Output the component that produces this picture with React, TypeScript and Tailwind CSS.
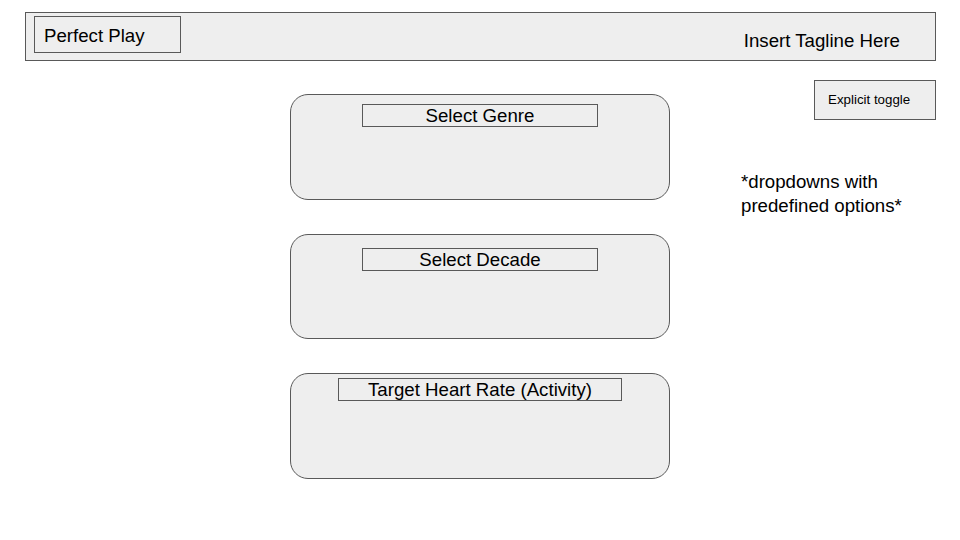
import React from "react";

function Card({ label, labelWidth, top, h }: { label: string; labelWidth: string; top: string; h: string }) {
  return (
    <div className={`${h} w-[380px] rounded-[18px] border border-[#595959] bg-[#eeeeee] flex flex-col items-center`}>
      <div className={`${top} ${labelWidth} h-[23px] pt-[2px] border border-[#595959] flex items-center justify-center text-[18.67px] leading-none text-black`}>
        {label}
      </div>
    </div>
  );
}

export default function App() {
  return (
    <div
      className="w-[960px] h-[540px] bg-white overflow-hidden text-black"
      style={{ fontFamily: '"Liberation Sans", Arial, sans-serif' }}
    >
      <div className="mt-[12px] ml-[25px] w-[911px] h-[49px] border border-[#595959] bg-[#eeeeee] flex items-start justify-between">
        <div className="mt-[3px] ml-[8px] w-[147px] h-[37px] pt-[3px] border border-[#595959] flex items-center pl-[9px] text-[18.67px] leading-none">
          Perfect Play
        </div>
        <div className="mt-[19px] mr-[35px] text-[18.67px] leading-none">Insert Tagline Here</div>
      </div>
      <div className="flex">
        <div className="ml-[290px] mt-[33px] w-[380px] flex flex-col gap-[34px]">
          <Card label="Select Genre" labelWidth="w-[236px]" top="mt-[9px]" h="h-[106px]" />
          <Card label="Select Decade" labelWidth="w-[236px]" top="mt-[13px]" h="h-[105px]" />
          <Card label="Target Heart Rate (Activity)" labelWidth="w-[284px]" top="mt-[4px]" h="h-[106px]" />
        </div>
        <div className="flex-1 flex flex-col">
          <div className="mt-[19px] self-end mr-[24px] w-[122px] h-[40px] border border-[#595959] bg-[#eeeeee] flex items-center pl-[13px] text-[13.33px] leading-none">
            Explicit toggle
          </div>
          <div className="mt-[50px] ml-[71px] text-[18.67px] leading-[24px]">
            *dropdowns with
            <br />
            predefined options*
          </div>
        </div>
      </div>
    </div>
  );
}
